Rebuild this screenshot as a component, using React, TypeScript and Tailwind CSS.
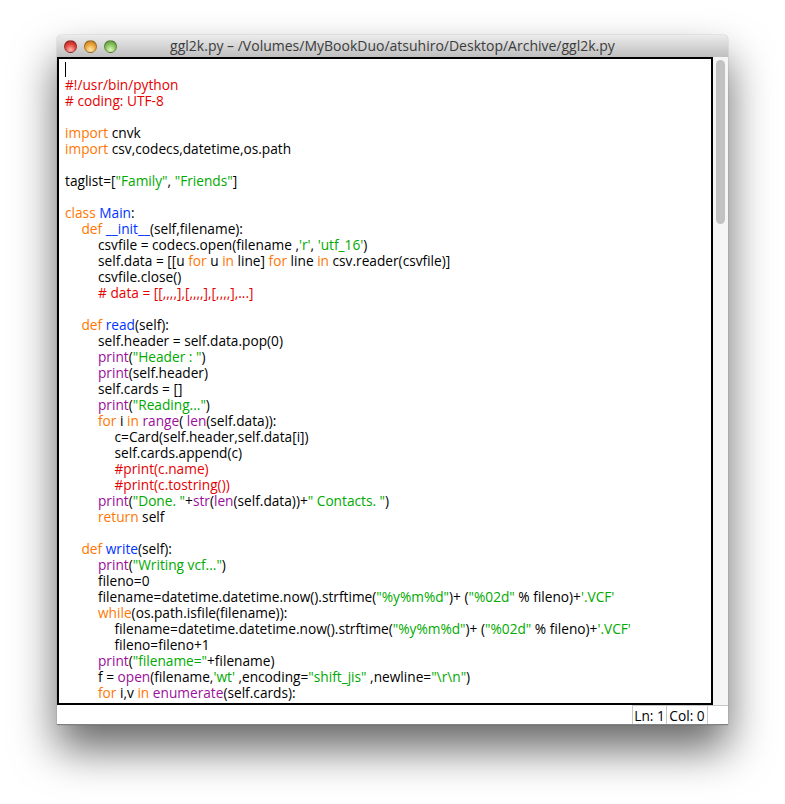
type Tok = [string, string];

const K = "text-[#ff7700]";
const S = "text-[#00aa00]";
const C = "text-[#e60000]";
const B = "text-[#9a109a]";
const D = "text-[#0033ff]";
const P = "text-black";

const p = (t: string): Tok => [t, P];
const k = (t: string): Tok => [t, K];
const s = (t: string): Tok => [t, S];
const c = (t: string): Tok => [t, C];
const b = (t: string): Tok => [t, B];
const d = (t: string): Tok => [t, D];

const indents = ["pl-0", "pl-[16.5px]", "pl-[33px]", "pl-[49.5px]"];

const lines: [number, Tok[]][] = [
  [0, []],
  [0, [c("#!/usr/bin/python")]],
  [0, [c("# coding: UTF-8")]],
  [0, []],
  [0, [k("import"), p(" cnvk")]],
  [0, [k("import"), p(" csv,codecs,datetime,os.path")]],
  [0, []],
  [0, [p("taglist=["), s('"Family"'), p(", "), s('"Friends"'), p("]")]],
  [0, []],
  [0, [k("class"), p(" "), d("Main"), p(":")]],
  [1, [k("def"), p(" "), d("__init__"), p("(self,filename):")]],
  [2, [p("csvfile = codecs.open(filename ,"), s("'r'"), p(", "), s("'utf_16'"), p(")")]],
  [2, [p("self.data = [[u "), k("for"), p(" u "), k("in"), p(" line] "), k("for"), p(" line "), k("in"), p(" csv.reader(csvfile)]")]],
  [2, [p("csvfile.close()")]],
  [2, [c("# data = [[,,,,],[,,,,],[,,,,],...]")]],
  [0, []],
  [1, [k("def"), p(" "), d("read"), p("(self):")]],
  [2, [p("self.header = self.data.pop(0)")]],
  [2, [b("print"), p("("), s('"Header : "'), p(")")]],
  [2, [b("print"), p("(self.header)")]],
  [2, [p("self.cards = []")]],
  [2, [b("print"), p("("), s('"Reading..."'), p(")")]],
  [2, [k("for"), p(" i "), k("in"), p(" "), b("range"), p("( "), b("len"), p("(self.data)):")]],
  [3, [p("c=Card(self.header,self.data[i])")]],
  [3, [p("self.cards.append(c)")]],
  [3, [c("#print(c.name)")]],
  [3, [c("#print(c.tostring())")]],
  [2, [b("print"), p("("), s('"Done. "'), p("+"), b("str"), p("("), b("len"), p("(self.data))+"), s('" Contacts. "'), p(")")]],
  [2, [k("return"), p(" self")]],
  [0, []],
  [1, [k("def"), p(" "), d("write"), p("(self):")]],
  [2, [b("print"), p("("), s('"Writing vcf..."'), p(")")]],
  [2, [p("fileno=0")]],
  [2, [p("filename=datetime.datetime.now().strftime("), s('"%y%m%d"'), p(")+ ("), s('"%02d"'), p(" % fileno)+"), s("'.VCF'")]],
  [2, [k("while"), p("(os.path.isfile(filename)):")]],
  [3, [p("filename=datetime.datetime.now().strftime("), s('"%y%m%d"'), p(")+ ("), s('"%02d"'), p(" % fileno)+"), s("'.VCF'")]],
  [3, [p("fileno=fileno+1")]],
  [2, [b("print"), p("("), s('"filename="'), p("+filename)")]],
  [2, [p("f = "), b("open"), p("(filename,"), s("'wt'"), p(" ,encoding="), s('"shift_jis"'), p(" ,newline="), s('"\\r\\n"'), p(")")]],
  [2, [k("for"), p(" i,v "), k("in"), p(" "), b("enumerate"), p("(self.cards):")]],
];

function Light({ color }: { color: string }) {
  return <span className={`block h-[13px] w-[13px] rounded-full border border-black/30 ${color}`} />;
}

export default function App() {
  return (
    <div className="h-[804px] w-[785px] overflow-hidden bg-white pl-[57px] pt-[35px] font-['Open_Sans',sans-serif] text-[13.7px]">
      <div className="flex h-[690px] w-[671px] flex-col rounded-t-[5px] bg-white shadow-[0_24px_44px_rgba(0,0,0,0.6),0_0_1px_rgba(0,0,0,0.6)]">
        <div className="relative flex h-[22px] shrink-0 items-center rounded-t-[5px] bg-gradient-to-b from-[#ececec] to-[#bfbfbf] pl-[7px]">
          <div className="flex gap-[7px]">
            <Light color="bg-[radial-gradient(circle_at_50%_80%,#ffb8b0,#e0403a_55%,#a02420)]" />
            <Light color="bg-[radial-gradient(circle_at_50%_80%,#ffe8a8,#e8a236_55%,#ac6f1e)]" />
            <Light color="bg-[radial-gradient(circle_at_50%_80%,#ddf8b8,#82bf58_55%,#558c38)]" />
          </div>
          <span className="absolute inset-x-0 text-center text-[14px] leading-[22px] text-[#3c3c3c]">
            ggl2k.py – /Volumes/MyBookDuo/atsuhiro/Desktop/Archive/ggl2k.py
          </span>
        </div>
        <div className="flex h-[648px] shrink-0">
          <div className="h-full w-[656px] shrink-0 overflow-hidden border-2 border-black bg-white pl-[6px] pt-[2px]">
            {lines.map(([indent, toks], i) => (
              <div key={i} className={`relative h-4 whitespace-pre leading-4 ${indents[indent]}`}>
                {i === 0 && <span className="absolute left-0 top-[1px] h-[15px] w-px bg-black" />}
                {toks.map(([t, cls], j) => (
                  <span key={j} className={cls}>{t}</span>
                ))}
              </div>
            ))}
          </div>
          <div className="flex-1 bg-[#f5f5f5] pl-[3px] pt-[3px]">
            <div className="h-[164px] w-[9px] rounded-full bg-[#c2c2c2]" />
          </div>
        </div>
        <div className="flex h-5 shrink-0 justify-end border-b border-b-[#808080] bg-white text-black">
          <div className="w-[35px] border-x border-t border-[#c8c8c8] text-center leading-[19px]">Ln: 1</div>
          <div className="w-[41px] border-r border-t border-[#c8c8c8] text-center leading-[19px]">Col: 0</div>
          <div className="w-5 border-t border-[#c8c8c8]" />
        </div>
      </div>
    </div>
  );
}
